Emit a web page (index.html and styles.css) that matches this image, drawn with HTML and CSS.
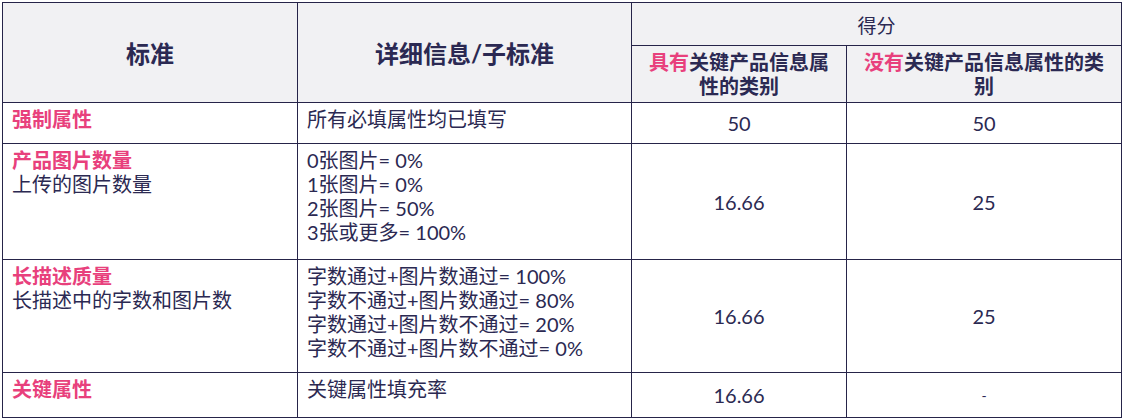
FILE: index.html
```html
<!DOCTYPE html>
<html lang="zh">
<head>
<meta charset="utf-8">
<link rel="stylesheet" href="styles.css">
</head>
<body>
<table class="score">
  <colgroup>
    <col class="c1"><col class="c2"><col class="c3"><col class="c4">
  </colgroup>
  <thead>
    <tr class="h1">
      <th rowspan="2" class="big">标准</th>
      <th rowspan="2" class="big">详细信息/子标准</th>
      <th colspan="2" class="group">得分</th>
    </tr>
    <tr class="h2">
      <th class="sub"><span class="pink">具有</span>关键产品信息属性的类别</th>
      <th class="sub"><span class="pink">没有</span>关键产品信息属性的类别</th>
    </tr>
  </thead>
  <tbody>
    <tr class="r1">
      <td class="crit"><div class="pink b">强制属性</div></td>
      <td class="det">所有必填属性均已填写</td>
      <td class="num">50</td>
      <td class="num">50</td>
    </tr>
    <tr class="r2">
      <td class="crit"><div class="pink b">产品图片数量</div><div>上传的图片数量</div></td>
      <td class="det"><div>0张图片= 0%</div><div>1张图片= 0%</div><div>2张图片= 50%</div><div>3张或更多= 100%</div></td>
      <td class="num">16.66</td>
      <td class="num">25</td>
    </tr>
    <tr class="r3">
      <td class="crit"><div class="pink b">长描述质量</div><div>长描述中的字数和图片数</div></td>
      <td class="det"><div>字数通过+图片数通过= 100%</div><div>字数不通过+图片数通过= 80%</div><div>字数通过+图片数不通过= 20%</div><div>字数不通过+图片数不通过= 0%</div></td>
      <td class="num">16.66</td>
      <td class="num">25</td>
    </tr>
    <tr class="r4">
      <td class="crit"><div class="pink b">关键属性</div></td>
      <td class="det">关键属性填充率</td>
      <td class="num">16.66</td>
      <td class="num dash">-</td>
    </tr>
  </tbody>
</table>
</body>
</html>
```
FILE: styles.css
```css
html, body {
  margin: 0;
  padding: 0;
  background: #ffffff;
}
body {
  padding: 2px 0 0 2px;
  font-family: "Lato", "Noto Sans CJK SC", sans-serif;
  color: #2b2952;
}
.score {
  border-collapse: collapse;
  table-layout: fixed;
  width: 1119px;
}
.c1 { width: 295px; }
.c2 { width: 334px; }
.c3 { width: 215px; }
.c4 { width: 275px; }
.score th, .score td {
  border: 1.5px solid #262449;
  padding: 0;
}
.score th {
  background: #f1f1f3;
  vertical-align: middle;
  text-align: center;
}
.h1 { height: 43px; }
.h2 { height: 57px; }
.big {
  font-size: 24px;
  font-weight: 700;
}
.group {
  font-size: 19px;
  font-weight: 400;
}
.sub {
  font-size: 20px;
  font-weight: 700;
  line-height: 24px;
  padding: 0 10px !important;
}
.pink { color: #e8407c; }
.b { font-weight: 700; }
.r1 { height: 41px; }
.r2 { height: 116px; }
.r3 { height: 113px; }
.r4 { height: 45px; }
.crit, .det {
  vertical-align: top;
  font-size: 20px;
  line-height: 24px;
  padding: 4px 9px 0 9px !important;
}
.num {
  text-align: center;
  vertical-align: middle;
  font-size: 20px;
}
.dash { font-size: 14px; }
```
